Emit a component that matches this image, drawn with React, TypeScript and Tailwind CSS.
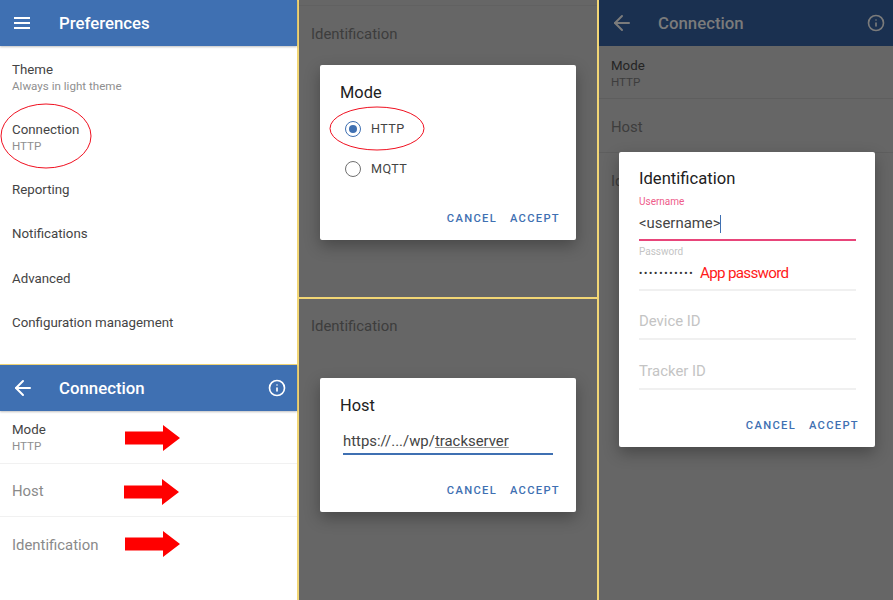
import { ArrowLeft, Info } from 'lucide-react';
import type { ReactNode } from 'react';

function AppBar({ title, icon, info = false, dim = false }: { title: string; icon: ReactNode; info?: boolean; dim?: boolean }) {
  return (
    <div
      className={`flex h-[46px] shrink-0 items-center pl-[14px] ${
        dim ? 'bg-[#1a3050] pr-[8px] text-[#7b7b7b]' : 'bg-[#3f70b2] pr-[11px] text-white shadow-[0_1px_2px_rgba(0,0,0,0.25)]'
      }`}
    >
      <div className="w-[45px]">{icon}</div>
      <div className="flex-1 pt-[2px] text-[16.8px] font-medium">{title}</div>
      {info && <Info size={18} strokeWidth={2.2} />}
    </div>
  );
}

function HamburgerIcon() {
  return (
    <svg width="16" height="12" viewBox="0 0 16 12" fill="currentColor">
      <rect y="0" width="16" height="2" />
      <rect y="5" width="16" height="2" />
      <rect y="10" width="16" height="2" />
    </svg>
  );
}

function PrefRow({ title, sub, className }: { title: string; sub?: string; className: string }) {
  return (
    <div className={`flex flex-col justify-center px-[12px] ${className}`}>
      <div className="text-[13.3px] leading-[17px] text-[#444444]">{title}</div>
      {sub && <div className="text-[11.6px] leading-[16px] text-[#8f8f8f]">{sub}</div>}
    </div>
  );
}

function Arrow({ className }: { className: string }) {
  return (
    <svg className={`absolute ${className}`} width="56" height="28" viewBox="0 0 56 28">
      <path d="M0 7.5H38V1L55 14L38 27V20.5H0Z" fill="#ff0000" />
    </svg>
  );
}

function Ellipse({ className, w, h }: { className: string; w: number; h: number }) {
  return (
    <svg className={`absolute ${className}`} width={w} height={h} viewBox={`0 0 ${w} ${h}`}>
      <ellipse cx={w / 2} cy={h / 2} rx={w / 2 - 1} ry={h / 2 - 1} fill="none" stroke="#f01020" strokeWidth="1" />
    </svg>
  );
}

function Actions() {
  return (
    <div className="flex justify-end gap-[13px] pr-[16px] text-[11.2px] font-medium tracking-[1.3px] text-[#3f70b2]">
      <span>CANCEL</span>
      <span>ACCEPT</span>
    </div>
  );
}

function Dialog({ className, children }: { className: string; children: ReactNode }) {
  return (
    <div className={`w-[256px] rounded-[2px] bg-white shadow-[0_6px_16px_rgba(0,0,0,0.3)] ${className}`}>{children}</div>
  );
}

function Radio({ label, checked = false }: { label: string; checked?: boolean }) {
  return (
    <div className="flex h-[40px] items-center pl-[25px] text-[12.6px] tracking-[0.4px] text-[#444444]">
      <span
        className={`mr-[10px] flex h-[16px] w-[16px] items-center justify-center rounded-full border-[1.5px] ${
          checked ? 'border-[#3f70b2]' : 'border-[#707070]'
        }`}
      >
        {checked && <span className="h-[8px] w-[8px] rounded-full bg-[#3f70b2]" />}
      </span>
      {label}
    </div>
  );
}

function Field({ label, className }: { label: string; className: string }) {
  return (
    <div className={`ml-[20px] mr-[19px] flex items-end border-b-2 border-[#f0f0f0] pb-[6px] text-[14.9px] text-[#c4c4c4] ${className}`}>
      {label}
    </div>
  );
}

function DimPanel({ className, children }: { className: string; children: ReactNode }) {
  return <div className={`bg-[#666666] ${className}`}>{children}</div>;
}

export default function App() {
  return (
    <div className="flex h-[600px] w-[893px] overflow-hidden bg-[#f2d675] font-['Roboto',sans-serif]">
      {/* left column: two screens */}
      <div className="flex w-[297px] shrink-0 flex-col gap-px">
        <div className="relative h-[364px] bg-white">
          <AppBar title="Preferences" icon={<HamburgerIcon />} />
          <PrefRow title="Theme" sub="Always in light theme" className="h-[60px] pt-[3px]" />
          <PrefRow title="Connection" sub="HTTP" className="h-[60px] pt-[3px]" />
          <PrefRow title="Reporting" className="h-[44px] pt-[2px]" />
          <PrefRow title="Notifications" className="h-[44px] pt-[2px]" />
          <PrefRow title="Advanced" className="h-[44px] pt-[4px]" />
          <PrefRow title="Configuration management" className="h-[45px] pt-[4px]" />
          <Ellipse className="left-0 top-[103px]" w={92} h={66} />
        </div>
        <div className="relative flex-1 bg-white">
          <AppBar title="Connection" icon={<ArrowLeft size={24} strokeWidth={2} className="-ml-[3px]" />} info />
          <PrefRow title="Mode" sub="HTTP" className="h-[53px] border-b border-[#f1f1f1]" />
          <div className="flex h-[53px] items-center border-b border-[#f1f1f1] px-[12px] pt-[2px] text-[14.9px] text-[#8a8a8a]">Host</div>
          <div className="flex h-[54px] items-center px-[12px] pt-[2px] text-[14.9px] text-[#8a8a8a]">Identification</div>
          <Arrow className="left-[125px] top-[59px]" />
          <Arrow className="left-[124px] top-[113px]" />
          <Arrow className="left-[125px] top-[165px]" />
        </div>
      </div>

      {/* middle column: dialogs */}
      <div className="ml-[2px] flex w-[298px] shrink-0 flex-col gap-[2px]">
        <DimPanel className="h-[297px] px-[21px] pt-[5px]">
          <div className="-mx-[21px] border-t border-[#616161] pl-[12px] pt-[18px] text-[14.9px] leading-[20px] text-[#3d3d3d]">Identification</div>
          <Dialog className="relative mt-[21px] h-[175px]">
            <div className="pl-[20px] pt-[18px] text-[16.4px] leading-[20px] text-[#212121]">Mode</div>
            <div className="mt-[6px]">
              <Radio label="HTTP" checked />
              <Radio label="MQTT" />
            </div>
            <div className="mt-[22px]">
              <Actions />
            </div>
            <Ellipse className="left-[9px] top-[41px]" w={96} h={45} />
          </Dialog>
        </DimPanel>
        <DimPanel className="flex-1 px-[21px] pt-[17px]">
          <div className="-mx-[21px] pl-[12px] text-[14.9px] leading-[20px] text-[#3d3d3d]">Identification</div>
          <Dialog className="mt-[42px] h-[134px]">
            <div className="pl-[20px] pt-[18px] text-[16.4px] leading-[20px] text-[#212121]">Host</div>
            <div className="mx-[23px] mt-[15px] border-b-2 border-[#3f70b2] pb-[2px] text-[14.9px] leading-[20px] text-[#444444]">
              https://.../wp/<span className="underline decoration-[#9a9a9a] underline-offset-[1px]">trackserver</span>
            </div>
            <div className="mt-[28px]">
              <Actions />
            </div>
          </Dialog>
        </DimPanel>
      </div>

      {/* right column */}
      <div className="ml-[2px] flex-1 bg-[#666666]">
        <AppBar title="Connection" icon={<ArrowLeft size={24} strokeWidth={2} className="-ml-[3px]" />} info dim />
        <div className="relative">
          <div className="flex h-[53px] flex-col justify-center border-b border-[#5e5e5e] px-[12px] pt-[3px]">
            <div className="text-[13.3px] leading-[17px] text-[#242424]">Mode</div>
            <div className="text-[11.6px] leading-[16px] text-[#3d3d3d]">HTTP</div>
          </div>
          <div className="flex h-[54px] items-center border-b border-[#5e5e5e] px-[12px] pt-[3px] text-[14.9px] text-[#3d3d3d]">Host</div>
          {/* only the start of this label shows beside the dialog */}
          <div className="flex h-[54px] items-center pl-[12px] pt-[2px] text-[14.9px] text-[#3d3d3d]">Id</div>
          <Dialog className="absolute left-[20px] top-[106px] h-[295px]">
            <div className="pl-[20px] pt-[17px] text-[16.6px] leading-[20px] text-[#212121]">Identification</div>
            <div className="ml-[20px] mr-[19px] mt-[7px] border-b-2 border-[#e8457a]">
              <div className="text-[10px] leading-[12px] text-[#ee5c8a]">Username</div>
              <div className="flex h-[31px] items-center text-[14.9px] text-[#444444]">
                &lt;username&gt;<span className="h-[18px] w-px bg-[#3f70b2]" />
              </div>
            </div>
            <div className="ml-[20px] mr-[19px] mt-[5px] border-b-2 border-[#f0f0f0]">
              <div className="text-[10px] leading-[12px] text-[#c4c4c4]">Password</div>
              <div className="flex h-[31px] items-center text-[#333333]">
                <span className="w-[61px] text-[9px] font-bold tracking-[1.8px]">•••••••••••</span>
                <span className="text-[15.2px] tracking-[-0.7px] text-[#ff1a1a]">App password</span>
              </div>
            </div>
            <Field label="Device ID" className="mt-[19px] h-[30px]" />
            <Field label="Tracker ID" className="mt-[20px] h-[30px]" />
            <div className="mt-[28px]">
              <Actions />
            </div>
          </Dialog>
        </div>
      </div>
    </div>
  );
}
